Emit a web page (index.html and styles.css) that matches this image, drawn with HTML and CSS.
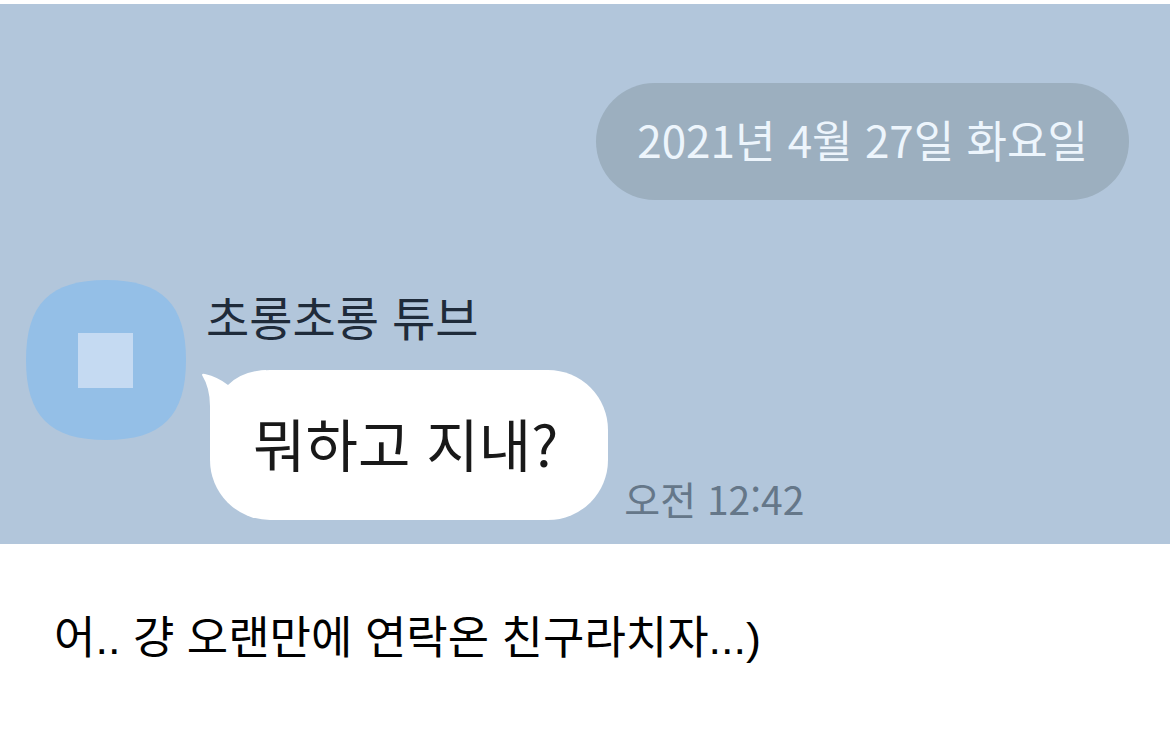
FILE: index.html
```html
<!DOCTYPE html>
<html lang="ko">
<head>
  <meta charset="UTF-8">
  <title>초롱초롱 튜브</title>
  <link rel="stylesheet" href="styles.css">
</head>
<body>

<main class="chat">
  <time class="date" datetime="2021-04-27">2021년 4월 27일 화요일</time>

  <div class="message">
    <div class="avatar">
      <svg viewBox="0 0 160 160" aria-hidden="true">
        <path fill="#94bfe7" d="M80 0C136 0 160 24 160 80S136 160 80 160 0 136 0 80 24 0 80 0Z"/>
        <path fill="#c5daf2" d="M52 53H107V108H52Z"/>
      </svg>
    </div>
    <div class="content">
      <div class="name">초롱초롱 튜브</div>
      <div class="row">
        <div class="bubble">
          <svg class="tail" viewBox="0 0 64 64" aria-hidden="true">
            <path fill="#fff" d="M0 5Q0 3 3 4Q16 7 26 15Q40 1 64 0V40H30L8 62V36Q8 18 0 5Z"/>
          </svg>
          뭐하고 지내?
        </div>
        <time class="time" datetime="00:42">오전 12:42</time>
      </div>
    </div>
  </div>
</main>

<p class="caption">어.. 걍 오랜만에 연락온 친구라치자...)</p>

</body>
</html>
```

FILE: styles.css
```css
body {
  margin: 0;
  background: #fff;
  color: #000;
  font-family: "Noto Sans CJK KR", sans-serif;
}
.chat {
  display: flex;
  flex-direction: column;
  margin-top: 4px;
  padding: 79px 26px 24px;
  background: #b2c6db;
}
.date {
  align-self: flex-end;
  margin-right: 15px;
  padding: 0 41px 4px;
  border-radius: 59px;
  background: #9cafbf;
  color: #edf5fc;
  font-size: 44px;
  line-height: 113px;
}
.message {
  display: flex;
  gap: 20px;
  margin-top: 80px;
}
.avatar {
  flex: none;
  width: 160px;
}
.avatar svg {
  display: block;
}
.name {
  color: #1f2b3a;
  font-size: 47px;
  line-height: 72px;
}
.row {
  display: flex;
  align-items: flex-end;
  gap: 16px;
  margin-top: 18px;
}
.bubble {
  position: relative;
  margin-left: 4px;
  padding: 0 50px 6px 43px;
  border-radius: 60px;
  background: #fff;
  color: #191919;
  font-size: 57px;
  line-height: 144px;
}
.tail {
  position: absolute;
  top: 0;
  left: -8px;
  width: 64px;
}
.time {
  color: #657789;
  font-size: 39px;
  line-height: 44px;
}
.caption {
  margin: 0;
  padding: 60px 54px;
  font-family: "Liberation Sans", "Noto Sans CJK KR", sans-serif;
  font-size: 45px;
  line-height: 70px;
}
```
